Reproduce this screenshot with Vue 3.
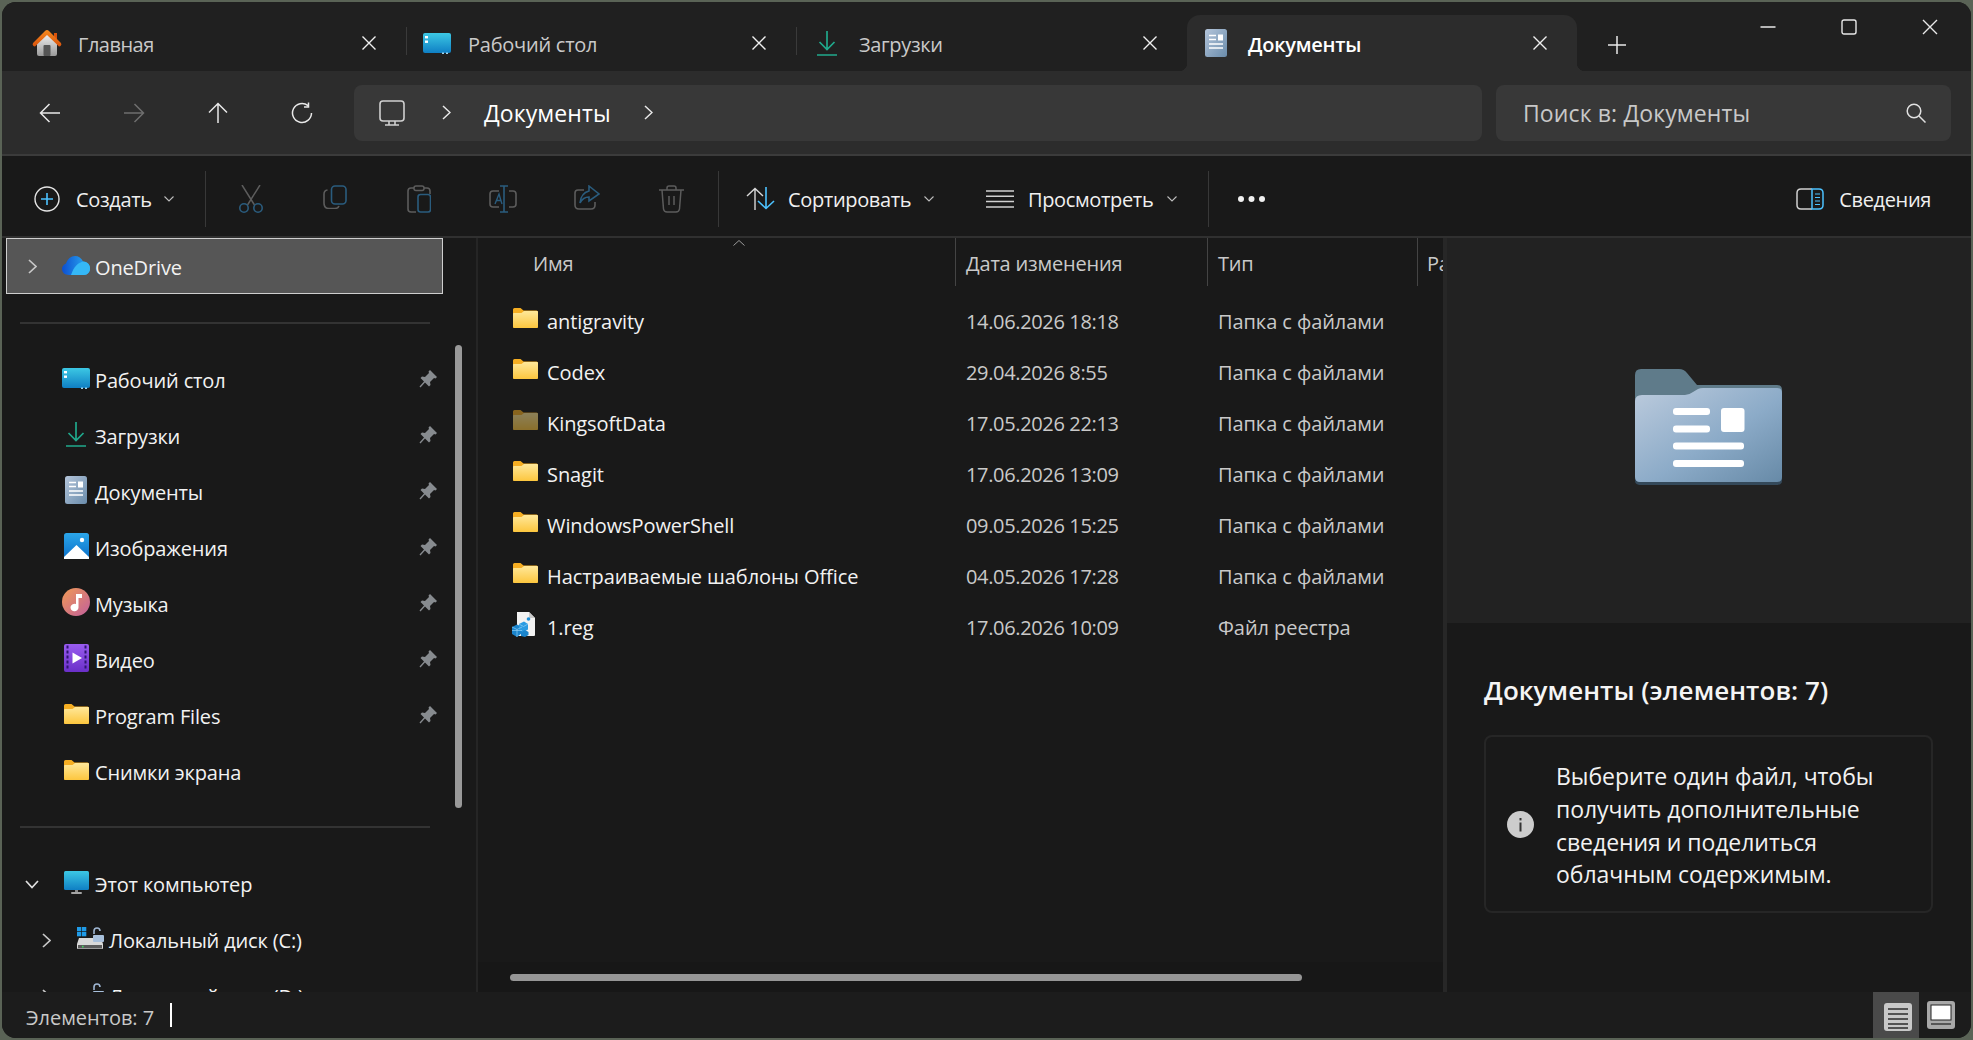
<template>
  <div class="desktop">
    <svg class="defs" width="0" height="0" aria-hidden="true">
      <defs>
        <linearGradient id="g-folder" x1="0" y1="0" x2="0" y2="1">
          <stop offset="0" stop-color="#ffe89a" />
          <stop offset="1" stop-color="#fcc63e" />
        </linearGradient>
        <linearGradient id="g-house" x1="0" y1="0" x2="0" y2="1">
          <stop offset="0" stop-color="#f4f4f4" />
          <stop offset="1" stop-color="#9a9a9a" />
        </linearGradient>
        <linearGradient id="g-roof" x1="0" y1="0" x2="0" y2="1">
          <stop offset="0" stop-color="#f58a1f" />
          <stop offset="1" stop-color="#d9530c" />
        </linearGradient>
        <linearGradient id="g-desk" x1="0" y1="0" x2="0" y2="1">
          <stop offset="0" stop-color="#3cc8e4" />
          <stop offset="1" stop-color="#0f7fc4" />
        </linearGradient>
        <linearGradient id="g-doc" x1="0" y1="0" x2="1" y2="1">
          <stop offset="0" stop-color="#b4c5da" />
          <stop offset="1" stop-color="#6a8cab" />
        </linearGradient>
        <linearGradient id="g-cloud" x1="0" y1="0" x2="1" y2="0">
          <stop offset="0" stop-color="#0d4fd0" />
          <stop offset="1" stop-color="#2cb3f5" />
        </linearGradient>
        <linearGradient id="g-pic" x1="0" y1="0" x2="0" y2="1">
          <stop offset="0" stop-color="#2ba6ea" />
          <stop offset="1" stop-color="#0b6fc8" />
        </linearGradient>
        <linearGradient id="g-music" x1="0" y1="0" x2="1" y2="1">
          <stop offset="0" stop-color="#f09a55" />
          <stop offset="1" stop-color="#c25f9c" />
        </linearGradient>
        <linearGradient id="g-video" x1="0" y1="0" x2="0" y2="1">
          <stop offset="0" stop-color="#9a5cf0" />
          <stop offset="1" stop-color="#6a2fc8" />
        </linearGradient>
        <linearGradient id="g-bigfolder" x1="0" y1="0" x2="1" y2="1">
          <stop offset="0" stop-color="#bccbdd" />
          <stop offset="0.55" stop-color="#8cabc8" />
          <stop offset="1" stop-color="#678aa7" />
        </linearGradient>
      </defs>
      <symbol id="i-folder" viewBox="0 0 25 20">
        <path d="M0 1.5Q0 0 1.5 0H7.5L10.5 2.5H23.5Q25 2.5 25 4V18.5Q25 20 23.5 20H1.5Q0 20 0 18.5Z" fill="#f6ae22" />
        <path d="M0 5.5Q0 5 1 5H8.5L11 3H24Q25 3 25 4V18.5Q25 20 23.5 20H1.5Q0 20 0 18.5Z" fill="url(#g-folder)" />
      </symbol>
      <symbol id="i-home" viewBox="0 0 30 26">
        <path d="M5 11L15 3L25 11V24Q25 26 23 26H7Q5 26 5 24Z" fill="url(#g-house)" />
        <rect x="11.5" y="15" width="7" height="11" rx="1" fill="#555" />
        <rect x="22" y="3" width="3" height="7" fill="#d9530c" />
        <path d="M15 0Q14 0 13 1L1 13Q0 15 1.5 16Q3 17 4 15.5L15 5L26 15.5Q27 17 28.5 16Q30 15 29 13L17 1Q16 0 15 0Z" fill="url(#g-roof)" />
      </symbol>
      <symbol id="i-desk" viewBox="0 0 28 21">
        <rect width="28" height="20" rx="2" fill="url(#g-desk)" />
        <rect x="2" y="3" width="3" height="2.4" fill="#fff" />
        <rect x="2" y="7.5" width="3" height="2.4" fill="#fff" />
        <rect x="19" y="19.5" width="2" height="1.5" fill="#9fd4ee" />
        <rect x="23" y="19.5" width="2" height="1.5" fill="#9fd4ee" />
      </symbol>
      <symbol id="i-down" viewBox="0 0 20 25">
        <path d="M10 0V18.5M2.5 11L10 18.5L17.5 11M0 24H20" fill="none" stroke="#20a98c" stroke-width="1.7" />
      </symbol>
      <symbol id="i-doc" viewBox="0 0 22 28">
        <rect width="22" height="28" rx="2.5" fill="url(#g-doc)" />
        <path d="M4 6.5H11M4 10.5H11M4 15H18M4 19H18" stroke="#fff" stroke-width="1.6" />
        <rect x="13" y="5.5" width="5" height="6" fill="#fff" />
      </symbol>
      <symbol id="i-cloud" viewBox="0 0 28 19">
        <path d="M7 19C2.5 19 0 16 0 13C0 10.5 1.5 8.5 4 7.5C5.5 3 9 0 13 0C16.5 0 19.5 2 21 5.5C25 5.5 28 8.5 28 12.5C28 16 25.5 19 22 19Z" fill="url(#g-cloud)" />
        <path d="M9 19C12 10 16 7 21 5.5C25 5.5 28 8.5 28 12.5C28 16 25.5 19 22 19Z" fill="#35b8f7" />
      </symbol>
      <symbol id="i-pic" viewBox="0 0 25 26">
        <rect width="25" height="26" rx="2.5" fill="url(#g-pic)" />
        <circle cx="18" cy="7" r="2.2" fill="#fff" />
        <path d="M0 24L12.5 12L25 24V26H0Z" fill="#fff" />
      </symbol>
      <symbol id="i-music" viewBox="0 0 28 28">
        <circle cx="14" cy="14" r="14" fill="url(#g-music)" />
        <path d="M14 6H20V10H16.5V19.5A4 3.8 0 1 1 14 16Z" fill="#fff" />
      </symbol>
      <symbol id="i-video" viewBox="0 0 25 28">
        <rect width="25" height="28" rx="2" fill="url(#g-video)" />
        <path d="M2.5 3H4.5M2.5 8H4.5M2.5 13H4.5M2.5 18H4.5M2.5 23H4.5M20.5 3H22.5M20.5 8H22.5M20.5 13H22.5M20.5 18H22.5M20.5 23H22.5" stroke="#2d1470" stroke-width="3" />
        <path d="M8.5 8.5L18 14L8.5 19.5Z" fill="#fff" />
      </symbol>
      <symbol id="i-pc" viewBox="0 0 25 23">
        <rect width="25" height="19" rx="1.5" fill="url(#g-desk)" />
        <rect x="11" y="19" width="3" height="2.5" fill="#8a8a8a" />
        <rect x="7" y="21" width="11" height="2" rx="1" fill="#a5a5a5" />
      </symbol>
      <symbol id="i-drive" viewBox="0 0 27 22">
        <path d="M2 11H24L26 17V21Q26 22 25 22H1Q0 22 0 21V17Z" fill="#d9d9d9" />
        <rect x="1" y="18" width="24" height="3.5" fill="#5a5a5a" />
        <rect x="5" y="18.8" width="1.6" height="1.6" fill="#3fd45c" />
        <path d="M17 7V4Q17 1 20 1Q23 1 23 4" fill="none" stroke="#9fb6d2" stroke-width="1.6" />
        <rect x="16" y="8" width="11" height="7" rx="1" fill="#a8c0dc" />
      </symbol>
      <symbol id="i-drive-sys" viewBox="0 0 27 22">
        <rect x="0" y="0" width="4.3" height="4.3" fill="#1f9be8" />
        <rect x="5" y="0" width="4.3" height="4.3" fill="#1f9be8" />
        <rect x="0" y="5" width="4.3" height="4.3" fill="#1f9be8" />
        <rect x="5" y="5" width="4.3" height="4.3" fill="#1f9be8" />
        <use href="#i-drive" width="27" height="22" />
      </symbol>
      <symbol id="i-reg" viewBox="0 0 23 25">
        <path d="M5 0H17L23 6V23Q23 24 22 24H5Z" fill="#f2f2f2" />
        <path d="M17 0L23 6H17Z" fill="#c9c9c9" />
        <path d="M0 15L5 12.5L10 15V21L5 25L0 22Z" fill="#1a84cc" />
        <path d="M7 12L12 9.5L16 12V17.5L11 20L7 18Z" fill="#2a9be2" />
        <path d="M9 20L13 18L16.5 20V23L13 25L9 24Z" fill="#1a84cc" />
        <path d="M0 15L5 17.5L10 15M5 17.5V25M0 18.5L10 18.5M7 12L11.5 14.5L16 12" fill="none" stroke="#8fd0f5" stroke-width="0.7" />
        <circle cx="16.5" cy="7" r="1.8" fill="#1e8fd8" />
      </symbol>
      <symbol id="i-pin" viewBox="0 0 18 18">
        <path d="M11 0L18 7L16.5 8.5L15 8L11 12L11.5 15L10 16.5L6 12.5L1.5 17.5L0.5 16.5L5 11.5L1.5 8L3 6.5L6 7L10 3L9.5 1.5Z" fill="#878b8f" />
      </symbol>
    </svg>

    <div class="window">
      <div class="tabbar">
        <div
          v-for="tab in tabs"
          :key="tab.label"
          class="tab"
          :class="[tab.cls, { active: tab.active }]"
        >
          <svg class="tab-icon" :width="tab.w" :height="tab.h"><use :href="'#' + tab.icon" /></svg>
          <span class="tab-label">{{ tab.label }}</span>
          <svg class="tab-close" width="16" height="16" viewBox="0 0 16 16">
            <path d="M1.5 1.5L14.5 14.5M14.5 1.5L1.5 14.5" stroke="#f0f0f0" stroke-width="1.4" fill="none" />
          </svg>
        </div>
        <svg class="tab-add" width="20" height="20" viewBox="0 0 20 20">
          <path d="M10 1V19M1 10H19" stroke="#e8e8e8" stroke-width="1.5" fill="none" />
        </svg>
        <div class="win-controls">
          <svg width="16" height="16" viewBox="0 0 16 16"><path d="M0.5 8H15.5" stroke="#e8e8e8" stroke-width="1.4" /></svg>
          <svg width="16" height="16" viewBox="0 0 16 16"><rect x="1" y="1" width="14" height="14" rx="2" stroke="#e8e8e8" stroke-width="1.4" fill="none" /></svg>
          <svg width="16" height="16" viewBox="0 0 16 16"><path d="M1 1L15 15M15 1L1 15" stroke="#e8e8e8" stroke-width="1.4" fill="none" /></svg>
        </div>
      </div>

      <div class="addressbar">
        <div class="nav-btn">
          <svg width="22" height="22" viewBox="0 0 22 22"><path d="M21 11H1.5M10.5 2L1.5 11L10.5 20" stroke="#e8e8e8" stroke-width="1.5" fill="none" /></svg>
        </div>
        <div class="nav-btn">
          <svg width="22" height="22" viewBox="0 0 22 22"><path d="M1 11H20.5M11.5 2L20.5 11L11.5 20" stroke="#6e6e6e" stroke-width="1.5" fill="none" /></svg>
        </div>
        <div class="nav-btn">
          <svg width="22" height="22" viewBox="0 0 22 22"><path d="M11 21V1.5M2 10.5L11 1.5L20 10.5" stroke="#e8e8e8" stroke-width="1.5" fill="none" /></svg>
        </div>
        <div class="nav-btn">
          <svg width="22" height="22" viewBox="0 0 22 22"><path d="M17 3.6A9.5 9.5 0 1 0 20.5 11M17.5 0.5V5H13" stroke="#e8e8e8" stroke-width="1.5" fill="none" /></svg>
        </div>
        <div class="crumbs">
          <svg class="crumb-pc" width="26" height="26" viewBox="0 0 26 26">
            <rect x="1" y="1" width="24" height="20" rx="3" stroke="#d0d0d0" stroke-width="1.6" fill="none" />
            <path d="M10 21V25M16 21V25M6 25H20" stroke="#d0d0d0" stroke-width="1.6" fill="none" />
          </svg>
          <svg class="crumb-chev" width="9" height="15" viewBox="0 0 9 15"><path d="M1 1L8 7.5L1 14" stroke="#e8e8e8" stroke-width="1.5" fill="none" /></svg>
          <span class="crumb-text">Документы</span>
          <svg class="crumb-chev2" width="9" height="15" viewBox="0 0 9 15"><path d="M1 1L8 7.5L1 14" stroke="#e8e8e8" stroke-width="1.5" fill="none" /></svg>
        </div>
        <div class="search">
          <span class="search-text">Поиск в: Документы</span>
          <svg width="20" height="20" viewBox="0 0 20 20">
            <circle cx="8" cy="8" r="6.8" stroke="#e0e0e0" stroke-width="1.5" fill="none" />
            <path d="M13 13L19.5 19.5" stroke="#e0e0e0" stroke-width="1.5" />
          </svg>
        </div>
      </div>

      <div class="toolbar">
        <svg class="tb-new" width="26" height="26" viewBox="0 0 26 26">
          <circle cx="13" cy="13" r="12" stroke="#e4e4e4" stroke-width="1.4" fill="none" />
          <path d="M13 7V19M7 13H19" stroke="#4cc2ff" stroke-width="1.6" />
        </svg>
        <span class="tb-label tb-new-label">Создать</span>
        <svg class="tb-down" width="10" height="6" viewBox="0 0 10 6"><path d="M0.5 0.5L5 5L9.5 0.5" stroke="#bbb" stroke-width="1.1" fill="none" /></svg>
        <div class="tb-sep tb-sep-1"></div>
        <div class="tb-cells">
          <div class="tb-cell">
            <svg width="24" height="28" viewBox="0 0 24 28">
              <path d="M3 0L15.5 20M21 0L8.5 20" stroke="#5c5c5c" stroke-width="1.5" fill="none" />
              <circle cx="5" cy="23" r="4.2" stroke="#2a5c7e" stroke-width="1.6" fill="none" />
              <circle cx="19" cy="23" r="4.2" stroke="#2a5c7e" stroke-width="1.6" fill="none" />
            </svg>
          </div>
          <div class="tb-cell">
            <svg width="24" height="24" viewBox="0 0 24 24">
              <path d="M4.5 5Q1 5.5 1 9V18Q1 23.5 6 23.5H12Q15 23.5 16 21" stroke="#5c5c5c" stroke-width="1.6" fill="none" />
              <rect x="8.5" y="1" width="14.5" height="18" rx="3.5" stroke="#2a5c7e" stroke-width="1.6" fill="none" />
            </svg>
          </div>
          <div class="tb-cell">
            <svg width="24" height="28" viewBox="0 0 24 28">
              <path d="M7 3H4Q1 3 1 6V24Q1 27 4 27H9M17 3H20Q23 3 23 6V9" stroke="#5c5c5c" stroke-width="1.6" fill="none" />
              <rect x="7" y="1" width="10" height="4.5" rx="2" stroke="#5c5c5c" stroke-width="1.5" fill="none" />
              <rect x="11" y="9.5" width="12.5" height="17.5" rx="2.5" stroke="#2a5c7e" stroke-width="1.6" fill="none" />
            </svg>
          </div>
          <div class="tb-cell">
            <svg width="28" height="28" viewBox="0 0 28 28">
              <path d="M10 6H4Q1 6 1 9V19Q1 22 4 22H10M20 6H24Q27 6 27 9V19Q27 22 24 22H20" stroke="#5c5c5c" stroke-width="1.6" fill="none" />
              <path d="M15 1V27M11 1H19M11 27H19" stroke="#2a5c7e" stroke-width="1.6" fill="none" />
              <path d="M6 19L10 9L13 19M7.5 15.5H12" stroke="#2a5c7e" stroke-width="1.4" fill="none" />
            </svg>
          </div>
          <div class="tb-cell">
            <svg width="26" height="25" viewBox="0 0 26 25">
              <path d="M10 5H4Q1 5 1 8V20Q1 24 5 24H17Q21 24 21 20V17" stroke="#5c5c5c" stroke-width="1.6" fill="none" />
              <path d="M15 1L25 9L15 16V12Q9 12 6 18Q7 8 15 6Z" stroke="#2a5c7e" stroke-width="1.6" fill="none" />
            </svg>
          </div>
          <div class="tb-cell">
            <svg width="25" height="28" viewBox="0 0 25 28">
              <path d="M0 5H25M8 5V3Q8 1 10 1H15Q17 1 17 3V5M3 5L4.5 24Q5 27 8 27H17Q20 27 20.5 24L22 5M10 11V20M15 11V20" stroke="#5c5c5c" stroke-width="1.5" fill="none" />
            </svg>
          </div>
        </div>
        <div class="tb-sep tb-sep-2"></div>
        <svg class="tb-sort" width="29" height="23" viewBox="0 0 29 23">
          <path d="M9 23V1.5M1 9L9 1.5L17 9" stroke="#d8d8d8" stroke-width="1.4" fill="none" />
          <path d="M20 0V21.5M12 14L20 21.5L28 14" stroke="#4cc2ff" stroke-width="1.6" fill="none" />
        </svg>
        <span class="tb-label tb-sort-label">Сортировать</span>
        <svg class="tb-down" width="10" height="6" viewBox="0 0 10 6"><path d="M0.5 0.5L5 5L9.5 0.5" stroke="#bbb" stroke-width="1.1" fill="none" /></svg>
        <svg class="tb-view" width="28" height="18" viewBox="0 0 28 18">
          <path d="M0 1H28M0 6.3H28M0 11.6H28M0 17H28" stroke="#d0d0d0" stroke-width="1.5" />
        </svg>
        <span class="tb-label tb-view-label">Просмотреть</span>
        <svg class="tb-down" width="10" height="6" viewBox="0 0 10 6"><path d="M0.5 0.5L5 5L9.5 0.5" stroke="#bbb" stroke-width="1.1" fill="none" /></svg>
        <div class="tb-sep tb-sep-3"></div>
        <svg class="tb-more" width="29" height="8" viewBox="0 0 29 8">
          <circle cx="4" cy="4" r="3" fill="#f0f0f0" />
          <circle cx="14.5" cy="4" r="3" fill="#f0f0f0" />
          <circle cx="25" cy="4" r="3" fill="#f0f0f0" />
        </svg>
        <div class="tb-details">
          <svg width="28" height="22" viewBox="0 0 28 22">
            <path d="M16 1H5Q1 1 1 5V17Q1 21 5 21H16" stroke="#d0d0d0" stroke-width="1.5" fill="none" />
            <path d="M16 1H23Q27 1 27 5V17Q27 21 23 21H16Z" stroke="#4cc2ff" stroke-width="1.5" fill="none" />
            <path d="M19 6H24M19 9.5H24M19 13H24M19 16.5H24" stroke="#4cc2ff" stroke-width="1.2" />
          </svg>
          <span class="tb-label">Сведения</span>
        </div>
      </div>

      <div class="main">
        <aside class="sidebar">
          <div class="nav-row selected">
            <span class="nav-chev">
              <svg width="9" height="15" viewBox="0 0 9 15"><path d="M1 1L8 7.5L1 14" stroke="#c8c8c8" stroke-width="1.7" fill="none" /></svg>
            </span>
            <span class="nav-icon"><svg width="28" height="19"><use href="#i-cloud" /></svg></span>
            <span class="nav-text">OneDrive</span>
          </div>
          <div class="nav-divider"></div>
          <div v-for="item in pinned" :key="item.label" class="nav-row">
            <span class="nav-chev"></span>
            <span class="nav-icon"><svg :width="item.w" :height="item.h"><use :href="'#' + item.icon" /></svg></span>
            <span class="nav-text">{{ item.label }}</span>
            <svg v-if="item.pin" class="nav-pin" width="18" height="18"><use href="#i-pin" /></svg>
          </div>
          <div class="nav-divider nav-divider-2"></div>
          <div class="nav-row">
            <span class="nav-chev">
              <svg width="14" height="9" viewBox="0 0 14 9"><path d="M1 1L7 7.5L13 1" stroke="#e0e0e0" stroke-width="1.7" fill="none" /></svg>
            </span>
            <span class="nav-icon"><svg width="25" height="23"><use href="#i-pc" /></svg></span>
            <span class="nav-text">Этот компьютер</span>
          </div>
          <div v-for="d in drives" :key="d.label" class="nav-row nested">
            <span class="nav-chev">
              <svg width="9" height="15" viewBox="0 0 9 15"><path d="M1 1L8 7.5L1 14" stroke="#c8c8c8" stroke-width="1.7" fill="none" /></svg>
            </span>
            <span class="nav-icon"><svg width="27" height="22"><use :href="'#' + d.icon" /></svg></span>
            <span class="nav-text">{{ d.label }}</span>
          </div>
          <div class="side-scroll"></div>
        </aside>

        <section class="files">
          <div class="file-head">
            <div class="col col-name">Имя</div>
            <div class="col col-date">Дата изменения</div>
            <div class="col col-type">Тип</div>
            <div class="col col-size">Размер</div>
            <svg class="sort-caret" width="12" height="6" viewBox="0 0 12 6"><path d="M0.5 5.5L6 0.5L11.5 5.5" stroke="#9a9a9a" stroke-width="1" fill="none" /></svg>
          </div>
          <div v-for="f in files" :key="f.name" class="file-row">
            <div class="file-name">
              <span class="file-icon">
                <svg v-if="f.reg" class="reg-icon" width="23" height="25"><use href="#i-reg" /></svg>
                <svg v-else class="folder-icon" width="25" height="20" :class="{ hidden: f.hidden }"><use href="#i-folder" /></svg>
              </span>
              <span>{{ f.name }}</span>
            </div>
            <div class="file-date">{{ f.date }}</div>
            <div class="file-type">{{ f.type }}</div>
          </div>
          <div class="h-track">
            <div class="h-scroll"></div>
          </div>
        </section>

        <aside class="details">
          <div class="preview">
            <svg width="147" height="116" viewBox="0 0 147 116">
              <path d="M0 6Q0 0 6 0H44Q49 0 52 4L62 16H142Q147 16 147 21V108Q147 116 139 116H8Q0 116 0 108Z" fill="#5f7b8a" />
              <path d="M0 108V112Q0 116 6 116H141Q147 116 147 112V108Z" fill="#34495a" />
              <path d="M0 32Q0 26 7 26H50Q54 26 58 23L63 20Q65 19 68 19H142Q147 19 147 24V108Q147 113 142 113H5Q0 113 0 108Z" fill="url(#g-bigfolder)" />
              <rect x="38" y="39" width="37" height="7" rx="3" fill="#fff" />
              <rect x="38" y="56.5" width="37" height="7" rx="3" fill="#fff" />
              <rect x="38" y="73.5" width="71" height="7" rx="3" fill="#fff" />
              <rect x="38" y="91" width="71" height="7" rx="3" fill="#fff" />
              <rect x="86" y="39" width="23.5" height="24" rx="3" fill="#fff" />
            </svg>
          </div>
          <div class="info">
            <h2 class="info-title">Документы (элементов: 7)</h2>
            <div class="info-card">
              <svg class="info-icon" width="27" height="27" viewBox="0 0 27 27">
                <circle cx="13.5" cy="13.5" r="13.5" fill="#cccccc" />
                <rect x="12.5" y="11.5" width="2" height="9" fill="#333" />
                <rect x="12.5" y="7" width="2" height="2.4" fill="#333" />
              </svg>
              <p class="info-text">Выберите один файл, чтобы получить дополнительные сведения и поделиться облачным содержимым.</p>
            </div>
          </div>
        </aside>
      </div>

      <footer class="statusbar">
        <span class="status-text">Элементов: 7</span>
        <span class="status-caret"></span>
        <div class="view-btn on">
          <svg width="28" height="28" viewBox="0 0 28 28">
            <rect width="28" height="28" rx="3" fill="#c8c8c8" />
            <path d="M4 6H24M4 11H24M4 16H24M4 21H24M4 25H24" stroke="#2c2c2c" stroke-width="1.6" />
          </svg>
        </div>
        <div class="view-btn">
          <svg width="28" height="28" viewBox="0 0 28 28">
            <rect x="0" y="0" width="28" height="28" rx="3" fill="#a8a8a8" />
            <rect x="4" y="4" width="20" height="15" fill="#fff" stroke="#222" stroke-width="1" />
            <path d="M4 23H24" stroke="#333" stroke-width="1.4" />
          </svg>
        </div>
      </footer>
    </div>
  </div>
</template>

<script setup>
const tabs = [
  { label: 'Главная', icon: 'i-home', w: 30, h: 26, cls: 'tab-home' },
  { label: 'Рабочий стол', icon: 'i-desk', w: 28, h: 21, cls: 'tab-desk' },
  { label: 'Загрузки', icon: 'i-down', w: 20, h: 25, cls: 'tab-down' },
  { label: 'Документы', icon: 'i-doc', w: 22, h: 28, cls: 'tab-doc', active: true },
];

const pinned = [
  { label: 'Рабочий стол', icon: 'i-desk', w: 28, h: 21, pin: true },
  { label: 'Загрузки', icon: 'i-down', w: 20, h: 25, pin: true },
  { label: 'Документы', icon: 'i-doc', w: 22, h: 28, pin: true },
  { label: 'Изображения', icon: 'i-pic', w: 25, h: 26, pin: true },
  { label: 'Музыка', icon: 'i-music', w: 28, h: 28, pin: true },
  { label: 'Видео', icon: 'i-video', w: 25, h: 28, pin: true },
  { label: 'Program Files', icon: 'i-folder', w: 25, h: 20, pin: true },
  { label: 'Снимки экрана', icon: 'i-folder', w: 25, h: 20 },
];

const drives = [
  { label: 'Локальный диск (C:)', icon: 'i-drive-sys' },
  { label: 'Локальный диск (D:)', icon: 'i-drive' },
];

const folderType = 'Папка с файлами';
const files = [
  { name: 'antigravity', date: '14.06.2026 18:18', type: folderType },
  { name: 'Codex', date: '29.04.2026 8:55', type: folderType },
  { name: 'KingsoftData', date: '17.05.2026 22:13', type: folderType, hidden: true },
  { name: 'Snagit', date: '17.06.2026 13:09', type: folderType },
  { name: 'WindowsPowerShell', date: '09.05.2026 15:25', type: folderType },
  { name: 'Настраиваемые шаблоны Office', date: '04.05.2026 17:28', type: folderType },
  { name: '1.reg', date: '17.06.2026 10:09', type: 'Файл реестра', reg: true },
];
</script>

<style>
html,
body {
  margin: 0;
  background: #5a6356;
}
</style>

<style scoped>
.desktop {
  width: 1973px;
  height: 1040px;
  padding: 2px;
  box-sizing: border-box;
  overflow: hidden;
  font-family: 'Open Sans', 'Noto Sans', sans-serif;
  font-size: 20px;
  letter-spacing: -0.35px;
  color: #f2f2f2;
}

.defs {
  position: absolute;
}

.window {
  width: 1969px;
  height: 1036px;
  border-radius: 14px;
  overflow: hidden;
  display: flex;
  flex-direction: column;
  background: #191919;
}

/* tabs */
.tabbar {
  height: 69px;
  flex: none;
  display: flex;
  align-items: flex-end;
  background: #202020;
  position: relative;
}

.tab {
  height: 56px;
  flex: none;
  box-sizing: border-box;
  display: flex;
  align-items: center;
  position: relative;
  color: #c9c9c9;
}

.tab-home {
  width: 404px;
  padding-left: 30px;
}

.tab-desk {
  width: 390px;
  padding-left: 17px;
}

.tab-down {
  width: 391px;
  padding-left: 21px;
}

.tab-doc {
  width: 390px;
  padding-left: 18px;
}

.tab-home::after,
.tab-desk::after {
  content: '';
  position: absolute;
  right: -1px;
  top: 12px;
  height: 28px;
  width: 1px;
  background: #3a3a3a;
}

.tab-label {
  margin-left: 17px;
  position: relative;
  top: 1px;
  letter-spacing: -0.25px;
}

.tab-home .tab-label {
  margin-left: 16px;
  letter-spacing: -0.5px;
}

.tab-down .tab-label {
  margin-left: 22px;
  letter-spacing: -0.35px;
}

.tab-doc .tab-label {
  margin-left: 21px;
}

.tab-close {
  margin-left: auto;
  margin-right: 29px;
}

.tab-icon {
  flex: none;
}

.tab.active {
  background: #2c2c2c;
  border-radius: 13px 13px 0 0;
  color: #ffffff;
}

.tab.active .tab-label {
  font-weight: 600;
}

.tab.active::before,
.tab.active::after {
  content: '';
  position: absolute;
  bottom: 0;
  width: 8px;
  height: 8px;
}

.tab.active::before {
  left: -8px;
  background: radial-gradient(circle at 0 0, transparent 8px, #2c2c2c 8.5px);
}

.tab.active::after {
  right: -8px;
  background: radial-gradient(circle at 100% 0, transparent 8px, #2c2c2c 8.5px);
}

.tab-add {
  margin-left: 30px;
  margin-bottom: 16px;
  flex: none;
}

.win-controls {
  position: absolute;
  top: 17px;
  right: 33px;
  display: flex;
  gap: 65px;
}

/* address row */
.addressbar {
  height: 83px;
  flex: none;
  display: flex;
  align-items: center;
  padding-left: 6px;
  background: #2c2c2c;
  border-bottom: 2px solid #3b3b3b;
}

.nav-btn {
  width: 84px;
  display: flex;
  justify-content: center;
}

.crumbs,
.search {
  height: 56px;
  background: #383838;
  border-radius: 8px;
  display: flex;
  align-items: center;
  box-sizing: border-box;
  font-size: 23px;
}

.crumbs {
  width: 1128px;
  margin-left: 10px;
  padding-left: 25px;
}

.crumb-chev {
  margin-left: 37px;
}

.crumb-text {
  margin-left: 33px;
  color: #ffffff;
  letter-spacing: 0.1px;
}

.crumb-chev2 {
  margin-left: 33px;
}

.search {
  width: 455px;
  margin-left: 14px;
  padding: 0 25px 0 27px;
  justify-content: space-between;
}

.search-text {
  color: #c8c8c8;
  letter-spacing: 0.12px;
}

/* toolbar */
.toolbar {
  height: 82px;
  flex: none;
  box-sizing: border-box;
  display: flex;
  align-items: center;
  padding-left: 32px;
  padding-top: 5px;
  background: #191919;
  border-bottom: 2px solid #303030;
}

.tb-new,
.tb-sort,
.tb-view,
.tb-down,
.tb-more {
  flex: none;
}

.tb-label {
  color: #f0f0f0;
  position: relative;
  top: 1px;
}

.tb-new-label {
  margin-left: 16px;
  width: 76px;
}

.tb-down {
  margin-left: 12px;
}

.tb-sep {
  width: 1px;
  height: 56px;
  background: #383838;
  flex: none;
}

.tb-sep-1 {
  margin-left: 31px;
}

.tb-cells {
  display: flex;
  margin-left: 3px;
}

.tb-cell {
  width: 84px;
  display: flex;
  justify-content: center;
}

.tb-sep-2 {
  margin-left: 5px;
}

.tb-sort {
  margin-left: 27px;
}

.tb-sort-label {
  margin-left: 13px;
  width: 124px;
}

.tb-view {
  margin-left: 52px;
}

.tb-view-label {
  margin-left: 14px;
  width: 127px;
}

.tb-sep-3 {
  margin-left: 31px;
}

.tb-more {
  margin-left: 28px;
}

.tb-details {
  margin-left: auto;
  margin-right: 40px;
  display: flex;
  align-items: center;
  gap: 15px;
}

/* main area */
.main {
  flex: 1;
  min-height: 0;
  display: flex;
}

.sidebar {
  width: 476px;
  flex: none;
  box-sizing: border-box;
  border-right: 2px solid #252525;
  overflow: hidden;
  position: relative;
}

.nav-row {
  height: 56px;
  display: flex;
  align-items: center;
  box-sizing: border-box;
  padding-right: 39px;
}

.nav-row.selected {
  margin-left: 4px;
  width: 437px;
  background: #565656;
  outline: 1px solid #cfcfcf;
  outline-offset: -1px;
}

.nav-row.selected .nav-chev {
  margin-left: 11px;
}

.nav-row.selected .nav-text {
  top: 1px;
  position: relative;
}

.nav-chev {
  width: 44px;
  margin-left: 15px;
  padding-left: 8px;
  box-sizing: border-box;
  flex: none;
  display: flex;
  align-items: center;
}

.nav-row .nav-chev svg[width='9'] {
  margin-left: 3px;
}

.nav-icon {
  width: 28px;
  flex: none;
  display: flex;
  justify-content: center;
  align-items: center;
  margin-left: 1px;
  margin-bottom: 4px;
}

.nav-row.selected .nav-icon {
  margin-bottom: 2px;
}

.nav-text {
  margin-left: 5px;
  white-space: nowrap;
  letter-spacing: -0.15px;
}

.nav-row.nested .nav-chev {
  margin-left: 29px;
}

.nav-row.nested .nav-text {
  margin-left: 5px;
}

.nav-pin {
  margin-left: auto;
  flex: none;
  position: relative;
  top: -1px;
}

.nav-divider {
  height: 2px;
  margin: 28px 46px 28px 18px;
  background: #333333;
}

.nav-divider-2 {
  margin-top: 26px;
}

.side-scroll {
  position: absolute;
  left: 453px;
  top: 107px;
  width: 7px;
  height: 463px;
  border-radius: 4px;
  background: #999999;
}

/* file list */
.files {
  flex: 1;
  min-width: 0;
  position: relative;
  overflow: hidden;
}

.file-head {
  height: 48px;
  display: grid;
  grid-template-columns: 478px 252px 210px 200px;
  margin-bottom: 10px;
  position: relative;
  color: #c9c9c9;
  letter-spacing: -0.2px;
}

.col {
  display: flex;
  align-items: center;
  padding-top: 2px;
  border-right: 1px solid #444444;
  box-sizing: border-box;
  white-space: nowrap;
  overflow: hidden;
}

.col-name {
  padding-left: 55px;
}

.col-date {
  padding-left: 10px;
}

.col-type {
  padding-left: 10px;
}

.col-size {
  padding-left: 9px;
  border-right: 0;
}

.sort-caret {
  position: absolute;
  left: 255px;
  top: 2px;
}

.file-row {
  height: 51px;
  display: grid;
  grid-template-columns: 488px 252px 1fr;
  align-items: center;
  white-space: nowrap;
}

.file-name {
  display: flex;
  align-items: center;
  padding-left: 35px;
  letter-spacing: -0.08px;
}

.file-icon {
  width: 34px;
  flex: none;
  display: flex;
  align-items: center;
}

.folder-icon {
  position: relative;
  top: -4px;
}

.reg-icon {
  position: relative;
  top: -3px;
  left: -1px;
}

.hidden {
  opacity: 0.5;
}

.file-date,
.file-type {
  color: #c9c9c9;
}

.file-type {
  letter-spacing: -0.07px;
}

.h-track {
  position: absolute;
  left: 0;
  right: 0;
  bottom: 0;
  height: 30px;
  background: #171717;
}

.h-scroll {
  position: absolute;
  left: 32px;
  bottom: 11px;
  width: 792px;
  height: 7px;
  border-radius: 4px;
  background: #969696;
}

/* details pane */
.details {
  width: 528px;
  flex: none;
  box-sizing: border-box;
  border-left: 4px solid #272727;
  display: flex;
  flex-direction: column;
}

.preview {
  height: 385px;
  flex: none;
  background: #222222;
  display: flex;
  justify-content: center;
  padding: 131px 2px 0 0;
  box-sizing: border-box;
}

.info {
  padding: 0 33px 0 37px;
}

.info-title {
  margin: 51px 0 29px;
  font-size: 26px;
  font-weight: 600;
  line-height: 32px;
  letter-spacing: 0.05px;
  color: #f5f5f5;
}

.info-card {
  width: 449px;
  height: 178px;
  box-sizing: border-box;
  border: 2px solid #262626;
  border-radius: 8px;
  display: flex;
  align-items: center;
  padding-left: 21px;
}

.info-icon {
  flex: none;
}

.info-text {
  margin: 3px 0 0 22px;
  font-size: 23px;
  line-height: 32.7px;
  letter-spacing: -0.05px;
  color: #f2f2f2;
  width: 360px;
}

/* status bar */
.statusbar {
  height: 46px;
  flex: none;
  display: flex;
  align-items: center;
  padding-left: 24px;
  background: #1c1c1c;
  color: #c9c9c9;
}

.status-text {
  position: relative;
  top: 2px;
  letter-spacing: -0.05px;
}

.status-caret {
  width: 2px;
  height: 24px;
  margin-left: 16px;
  background: #ffffff;
}

.view-btn {
  width: 46px;
  height: 46px;
  display: flex;
  align-items: center;
  justify-content: center;
  flex: none;
  box-sizing: border-box;
  padding-top: 4px;
}

.view-btn.on {
  margin-left: auto;
  background: #4a4a4a;
  padding-left: 4px;
}

.view-btn:not(.on) {
  margin-right: 13px;
  margin-left: 5px;
  width: 34px;
  padding-top: 0;
}
</style>
